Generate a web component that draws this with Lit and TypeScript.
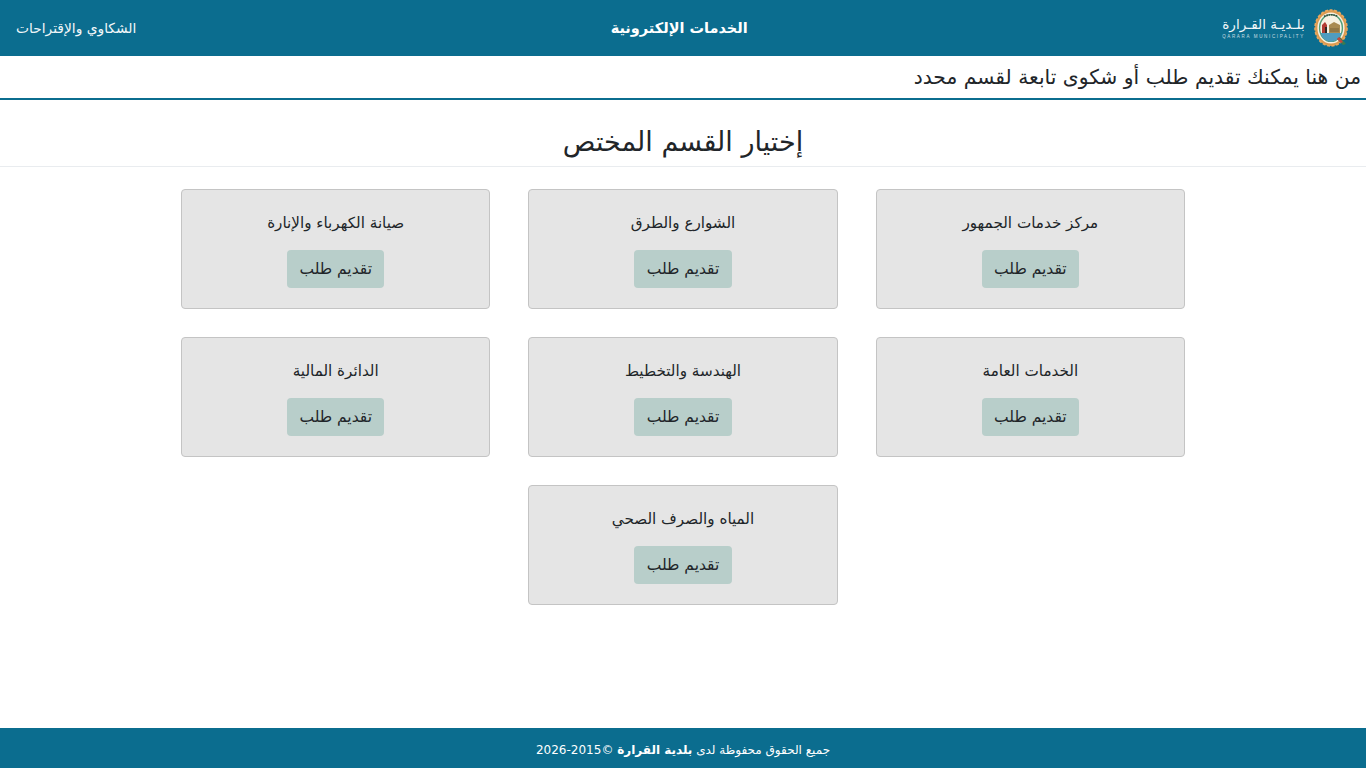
import { LitElement, html, css } from "lit";
import { customElement } from "lit/decorators.js";

const depts = [
  "مركز خدمات الجمهور",
  "الشوارع والطرق",
  "صيانة الكهرباء والإنارة",
  "الخدمات العامة",
  "الهندسة والتخطيط",
  "الدائرة المالية",
  "المياه والصرف الصحي",
];

@customElement("app-root")
export class AppRoot extends LitElement {
  static styles = css`
    :host {
      display: flex;
      flex-direction: column;
      height: 768px;
      background: #fff;
      color: #212529;
      font-family: "DejaVu Sans", "Noto Sans", sans-serif;
      direction: rtl;
    }
    .top {
      height: 56px;
      flex: none;
      background: #0b6d8f;
      color: #fff;
      display: flex;
      justify-content: space-between;
      align-items: center;
      padding: 0 17px 0 16px;
    }
    .brand { display: flex; align-items: center; gap: 8px; }
    .logo { display: block; }
    .brand-text { display: flex; flex-direction: column; align-items: center; width: 83px; line-height: 1; padding-top: 1px; }
    .brand-ar { font-size: 13.6px; opacity: .95; white-space: nowrap; }
    .brand-en { font-size: 4.5px; letter-spacing: 1.66px; direction: ltr; margin-top: 3px; opacity: .75; font-family: "Liberation Sans", sans-serif; white-space: nowrap; }
    .title { font-size: 14.5px; font-weight: 700; }
    .link { font-size: 13.8px; opacity: .95; }
    .intro {
      height: 44px;
      box-sizing: border-box;
      flex: none;
      border-bottom: 2px solid #0b6d8f;
      font-size: 20.3px;
      padding: 0 5px;
      display: flex;
      align-items: center;
    }
    h1 {
      margin: 0;
      height: 67px;
      flex: none;
      box-sizing: border-box;
      border-bottom: 1px solid #e9ecef;
      font-size: 27px;
      font-weight: 400;
      text-align: center;
      padding-top: 23px;
      line-height: 38px;
    }
    .grid {
      margin: 22px auto 0;
      width: 1004px;
      display: flex;
      flex-wrap: wrap;
      justify-content: center;
      column-gap: 38px;
      row-gap: 28px;
    }
    .card {
      box-sizing: border-box;
      width: 309.33px;
      height: 120px;
      background: #e5e5e5;
      border: 1px solid #c4c4c4;
      border-radius: 4px;
      display: flex;
      flex-direction: column;
      align-items: center;
      padding-top: 22px;
    }
    .name { font-size: 15.2px; line-height: 22px; height: 22px; }
    button {
      all: unset;
      box-sizing: border-box;
      margin-top: 16px;
      height: 38px;
      width: 97.5px;
      background: #b8ceca;
      border-radius: 4px;
      font-size: 15.5px;
      text-align: center;
      line-height: 36px;
      color: #212529;
    }
    .spacer { flex: 1; }
    footer {
      height: 40px;
      flex: none;
      box-sizing: border-box;
      padding-top: 4px;
      background: #0b6d8f;
      color: #fff;
      font-size: 12px;
      display: flex;
      align-items: center;
      justify-content: center;
    }
  `;

  logo() {
    return html`<svg class="logo" width="36" height="40" viewBox="0 0 36 40" aria-hidden="true">
      <ellipse cx="18" cy="20" rx="16" ry="18" fill="#dd9a4e" stroke="#e6a861" stroke-width="1.6" stroke-dasharray="3 1.6" />
      <ellipse cx="18" cy="20" rx="13.6" ry="15.6" fill="#f6f1e3" />
      <ellipse cx="18" cy="20" rx="11.4" ry="13.4" fill="none" stroke="#4f9e78" stroke-width="1.4" />
      <path d="M7.5 25h21a11 12.5 0 0 1-21 0z" fill="#4f9cc0" />
      <path d="M9 25v-8l3-3 2 3v8z" fill="#b23c34" />
      <path d="M12 25v-6h2v6z" fill="#2d2a26" />
      <path d="M16 25v-8l5-3 6 3v8z" fill="#a98a52" />
      <path d="M17 21h9M17 23h9" stroke="#6e5a36" stroke-width=".8" />
      <path d="M11 8.5q7-3.5 14 0" fill="none" stroke="#3a4a3e" stroke-width="1.6" stroke-dasharray="1.6 .8" />
      <path d="M24 31l6 6 3-1-6-7z" fill="#3a7c4f" />
      <path d="M24 31l4 4 2-1-4-5z" fill="#c9463d" />
    </svg>`;
  }

  render() {
    return html`
      <header class="top">
        <div class="brand">
          ${this.logo()}
          <div class="brand-text">
            <span class="brand-ar">بلـديـة القـرارة</span>
            <span class="brand-en">QARARA MUNICIPALITY</span>
          </div>
        </div>
        <div class="title">الخدمات الإلكترونية</div>
        <div class="link">الشكاوي والإقتراحات</div>
      </header>
      <div class="intro">من هنا يمكنك تقديم طلب أو شكوى تابعة لقسم محدد</div>
      <h1>إختيار القسم المختص</h1>
      <main class="grid">
        ${depts.map(
          (d) => html`<div class="card">
            <div class="name">${d}</div>
            <button>تقديم طلب</button>
          </div>`
        )}
      </main>
      <div class="spacer"></div>
      <footer>
        <span>جميع الحقوق محفوظة لدى <b>بلدية القرارة</b> ©2015-2026</span>
      </footer>
    `;
  }
}
